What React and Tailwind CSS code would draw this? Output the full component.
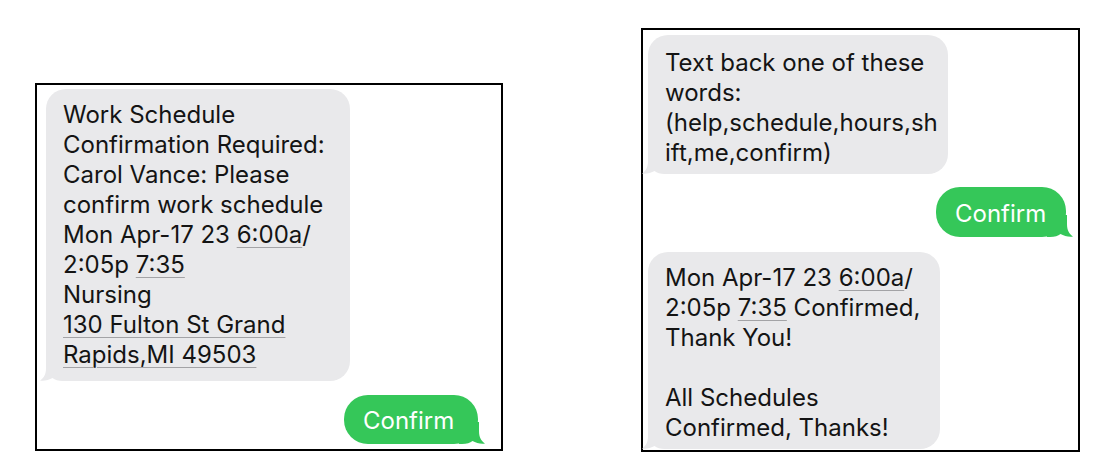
import React from 'react';

const GRAY = '#e9e9eb';
const GREEN = '#35c759';

// underlined link-ish text, like iOS data detectors
function U({ children }) {
  return (
    <span className="underline decoration-[#a3a3a6] decoration-1 underline-offset-[4px]">
      {children}
    </span>
  );
}

function Received({ className = '', children }) {
  return (
    <div className={`relative bg-[#e9e9eb] rounded-[20px] ${className}`}>
      <svg className="absolute left-[-6px] bottom-0" width="26" height="22" viewBox="0 0 26 22">
        <path d="M6 0V9C6 15 4 19 0 21.5C4 22.2 9 21 12.5 19C15 20.8 18 22 23 22H26V0Z" fill={GRAY} />
      </svg>
      <div className="relative">{children}</div>
    </div>
  );
}

function Sent({ className = '', children }) {
  return (
    <div className={`relative bg-[#35c759] rounded-[24px] text-white ${className}`}>
      <svg className="absolute right-[-7px] bottom-0" width="26" height="22" viewBox="0 0 26 22">
        <path d="M20 0V9C20 15 22 19 26 21.5C22 22.2 17 21 13.5 19C11 20.8 8 22 3 22H0V0Z" fill={GREEN} />
      </svg>
      <div className="relative">{children}</div>
    </div>
  );
}

function Lines({ lines }) {
  return (
    <div className="text-[24px] leading-[30px] text-[#141414] whitespace-nowrap">
      {lines.map((l, i) => (
        <div key={i} className="h-[30px]">{l}</div>
      ))}
    </div>
  );
}

export default function App() {
  return (
    <div className="w-[1103px] h-[476px] bg-white flex items-start pl-[35px] font-['Inter','Liberation_Sans',sans-serif]">
      {/* left screenshot */}
      <div className="mt-[83px] w-[468px] h-[368px] border-2 border-black flex flex-col">
        <Received className="ml-[9px] mt-[4px] w-[304px] pl-[17px] pt-[11px] pb-[11px]">
          <Lines
            lines={[
              'Work Schedule',
              'Confirmation Required:',
              'Carol Vance: Please',
              'confirm work schedule',
              <>Mon Apr-17 23 <U>6:00a</U>/</>,
              <>2:05p <U>7:35</U></>,
              'Nursing',
              <U>130 Fulton St Grand</U>,
              <U>Rapids,MI 49503</U>,
            ]}
          />
        </Received>
        <Sent className="self-end mr-[23px] mt-[14px] w-[134px] h-[49px] pl-[19px] pt-[3px] flex items-center">
          <span className="text-[24px] leading-[30px]">Confirm</span>
        </Sent>
      </div>

      {/* right screenshot */}
      <div className="ml-[138px] mt-[28px] w-[439px] h-[424px] border-2 border-black flex flex-col">
        <Received className="ml-[5px] mt-[5px] w-[300px] pl-[17px] pt-[13px] pb-[6px]">
          <Lines
            lines={[
              'Text back one of these',
              'words:',
              '(help,schedule,hours,sh',
              'ift,me,confirm)',
            ]}
          />
        </Received>
        <Sent className="self-end mr-[12px] mt-[13px] w-[130px] h-[50px] pl-[19px] pt-[3px] flex items-center">
          <span className="text-[24px] leading-[30px]">Confirm</span>
        </Sent>
        <Received className="ml-[5px] mt-[15px] w-[292px] pl-[17px] pt-[11px] pb-[6px]">
          <Lines
            lines={[
              <>Mon Apr-17 23 <U>6:00a</U>/</>,
              <>2:05p <U>7:35</U> Confirmed,</>,
              'Thank You!',
              '',
              'All Schedules',
              'Confirmed, Thanks!',
            ]}
          />
        </Received>
      </div>
    </div>
  );
}
